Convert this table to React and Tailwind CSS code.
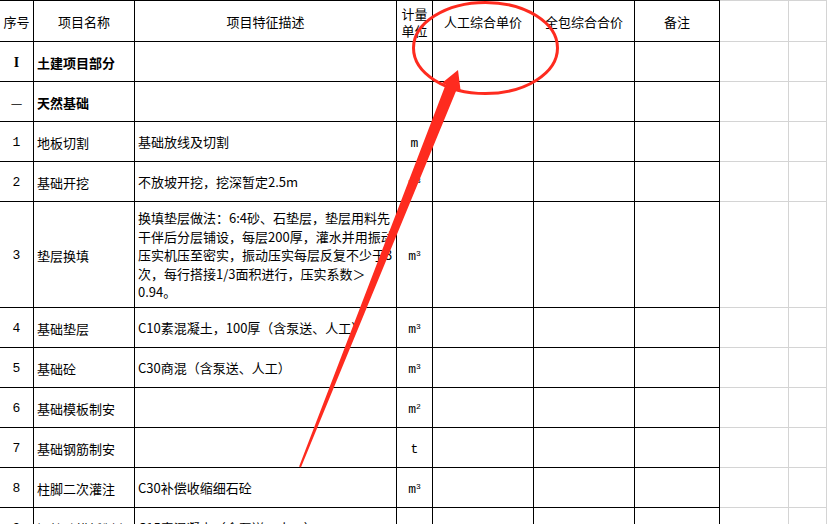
import React from 'react';

const GRID = 'grid grid-cols-[34px_101px_262px_36px_101px_101px_85px_69px_1fr]';
const CJK = "font-['Noto_Sans_CJK_SC',sans-serif]";
const MONO = "font-['Liberation_Mono','Noto_Sans_CJK_SC',monospace]";

const Unit = ({ u }) => {
  if (u === 'm3' || u === 'm2') {
    return (
      <span>
        m<span className="relative -top-[4px] text-[8px]">{u === 'm3' ? '3' : '2'}</span>
      </span>
    );
  }
  return <span>{u}</span>;
};

const rows = [
  { no: 'I', name: '土建项目部分', bold: true },
  { no: '—', name: '天然基础', bold: true },
  { no: '1', name: '地板切割', desc: ['基础放线及切割'], unit: 'm' },
  { no: '2', name: '基础开挖', desc: ['不放坡开挖，挖深暂定2.5m'], unit: 'm3' },
  {
    no: '3',
    name: '垫层换填',
    h: 'h-[106px]',
    desc: [
      '换填垫层做法：6:4砂、石垫层，垫层用料先',
      '干伴后分层铺设，每层200厚，灌水并用振动',
      '压实机压至密实，振动压实每层反复不少于3',
      '次，每行搭接1/3面积进行，压实系数＞',
      '0.94。',
    ],
    unit: 'm3',
  },
  { no: '4', name: '基础垫层', desc: ['C10素混凝土，100厚（含泵送、人工）'], unit: 'm3' },
  { no: '5', name: '基础砼', desc: ['C30商混（含泵送、人工）'], unit: 'm3' },
  { no: '6', name: '基础模板制安', unit: 'm2' },
  { no: '7', name: '基础钢筋制安', unit: 't' },
  { no: '8', name: '柱脚二次灌注', desc: ['C30补偿收缩细石砼'], unit: 'm3' },
  { no: '9', name: '短柱砼模板制安', desc: ['C15素混凝土（含泵送、人工）'], unit: 'm3' },
];

const Cell = ({ children, className = '', gray }) => (
  <div
    className={`border-b border-r overflow-hidden ${gray ? 'border-[#d4d4d4]' : 'border-black'} ${className}`}
  >
    {children}
  </div>
);

const noClass = (no) => {
  if (no === 'I') return "font-['Liberation_Serif',serif] font-bold text-[14px]";
  if (no === '—') return CJK;
  return MONO;
};

export default function App() {
  return (
    <div className={`relative w-[827px] h-[524px] overflow-hidden bg-white text-black text-[13px] ${CJK}`}>
      {/* header */}
      <div className={`${GRID} h-[42px]`}>
        <Cell className="border-t flex items-center justify-center pt-[1px]">序号</Cell>
        <Cell className="border-t flex items-center justify-center pt-[1px]">项目名称</Cell>
        <Cell className="border-t flex items-center justify-center pt-[1px]">项目特征描述</Cell>
        <Cell className="border-t flex flex-col items-center justify-center leading-[17px] pt-[1px]">
          <span>计量</span>
          <span>单位</span>
        </Cell>
        <Cell className="border-t flex items-center justify-center pt-[1px]">人工综合单价</Cell>
        <Cell className="border-t flex items-center justify-center pt-[1px]">全包综合合价</Cell>
        <Cell className="border-t flex items-center justify-center pt-[1px]">备注</Cell>
        <Cell gray className="border-t" />
        <Cell gray className="border-t" />
      </div>

      {rows.map((r, i) => (
        <div key={i} className={`${GRID} ${r.h || 'h-[40px]'}`}>
          <Cell className={`flex items-center justify-center pt-[2px] ${noClass(r.no)}`}>{r.no}</Cell>
          <Cell className={`flex items-center pl-[3px] pt-[2px] whitespace-nowrap ${r.bold ? 'font-bold' : ''}`}>
            {r.name}
          </Cell>
          <Cell className="flex flex-col justify-center pl-[3px] pt-[2px] leading-[18.5px] whitespace-nowrap">
            {(r.desc || []).map((line, j) => (
              <div key={j}>{line}</div>
            ))}
          </Cell>
          <Cell className={`flex items-center justify-center pt-[4px] ${MONO}`}>
            {r.unit && <Unit u={r.unit} />}
          </Cell>
          <Cell />
          <Cell />
          <Cell />
          <Cell gray />
          <Cell gray />
        </div>
      ))}

      {/* red annotation */}
      <svg className="absolute left-0 top-0 pointer-events-none" width="827" height="524" viewBox="0 0 827 524">
        <ellipse cx="485.5" cy="48" rx="72" ry="45.5" fill="none" stroke="#fe2b1f" strokeWidth="3" />
        <polygon
          points="458,70 460.6,90.4 456.9,88.9 300.9,467.4 299.1,466.6 445.7,84.5 442,83"
          fill="#fe2b1f"
        />
      </svg>
    </div>
  );
}
